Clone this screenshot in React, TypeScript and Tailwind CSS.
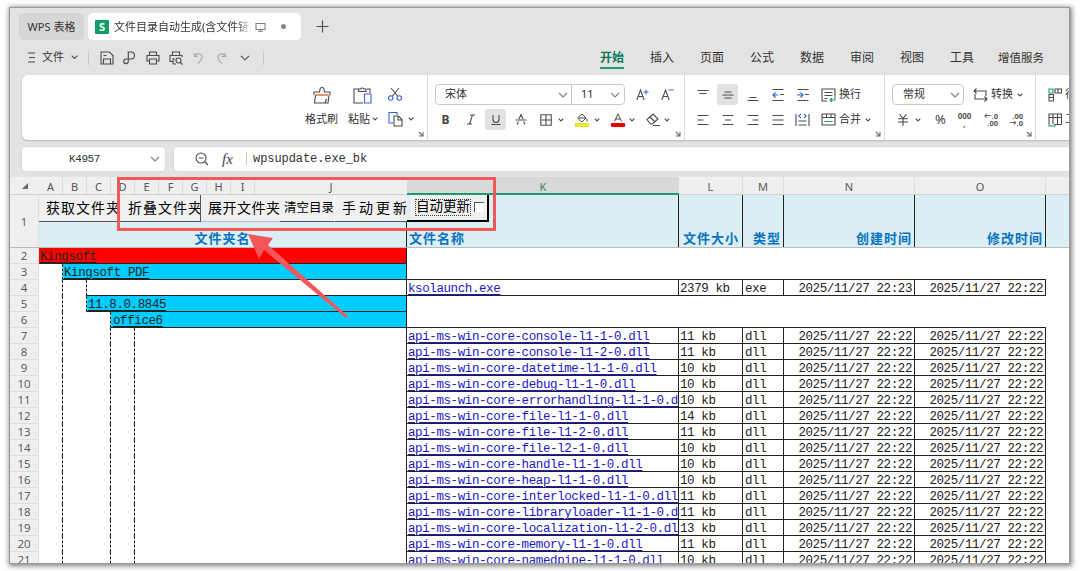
import React from 'react';

const files = [
  { name: 'api-ms-win-core-console-l1-1-0.dll', size: 11 },
  { name: 'api-ms-win-core-console-l1-2-0.dll', size: 11 },
  { name: 'api-ms-win-core-datetime-l1-1-0.dll', size: 10 },
  { name: 'api-ms-win-core-debug-l1-1-0.dll', size: 10 },
  { name: 'api-ms-win-core-errorhandling-l1-1-0.dll', size: 10 },
  { name: 'api-ms-win-core-file-l1-1-0.dll', size: 14 },
  { name: 'api-ms-win-core-file-l1-2-0.dll', size: 11 },
  { name: 'api-ms-win-core-file-l2-1-0.dll', size: 10 },
  { name: 'api-ms-win-core-handle-l1-1-0.dll', size: 10 },
  { name: 'api-ms-win-core-heap-l1-1-0.dll', size: 10 },
  { name: 'api-ms-win-core-interlocked-l1-1-0.dll', size: 11 },
  { name: 'api-ms-win-core-libraryloader-l1-1-0.dll', size: 11 },
  { name: 'api-ms-win-core-localization-l1-2-0.dll', size: 13 },
  { name: 'api-ms-win-core-memory-l1-1-0.dll', size: 11 },
  { name: 'api-ms-win-core-namedpipe-l1-1-0.dll', size: 10 },
];

const menus = ['插入', '页面', '公式', '数据', '审阅', '视图', '工具'];

function Icon({ d, blue, green, w = 16, h = 16, className = '' }: { d?: string; blue?: string; green?: string; w?: number; h?: number; className?: string }) {
  return (
    <svg width={w} height={h} viewBox={`0 0 ${w} ${h}`} fill="none" stroke="#4a4a4a" strokeWidth="1.1" className={`shrink-0 ${className}`}>
      {d && <path d={d} />}
      {blue && <path d={blue} stroke="#3b62d6" />}
      {green && <path d={green} stroke="#1a9a68" />}
    </svg>
  );
}

function Chevron({ big = false }: { big?: boolean }) {
  return big
    ? <Icon w={10} h={6} d="M1 1l4 4 4-4" className="opacity-70" />
    : <Icon w={6} h={4} d="M.7.7L3 3 5.3.7" />;
}

function Launcher() {
  return <Icon w={6} h={6} d="M1 1l4 4M5 1v4H1" className="absolute right-[3px] bottom-[3px] opacity-80" />;
}

function Slot({ children, active = false }: { children: React.ReactNode; active?: boolean }) {
  return (
    <div className="flex w-[25px] shrink-0 items-center justify-center">
      <div className={`flex h-[21px] w-[21px] items-center justify-center rounded-[3px] ${active ? 'bg-[#e2e2e2]' : ''}`}>{children}</div>
    </div>
  );
}

function TitleBar() {
  return (
    <div className="flex h-[32px] shrink-0 items-start pt-[5px] pl-[9px] text-[11px] leading-[27px]">
      <div className="h-[27px] w-[65px] rounded-[5px] bg-[#d6d6d6] text-center">WPS 表格</div>
      <div className="ml-[4px] flex h-[27px] w-[213px] items-center rounded-[5px] bg-white pl-[7px]">
        <div className="flex h-[14px] w-[14px] items-center justify-center rounded-[1px] bg-[#109d68] text-[11px] leading-none font-bold text-white">S</div>
        <div className="ml-[5px] w-[138px] overflow-hidden whitespace-nowrap [mask-image:linear-gradient(to_right,black_88%,transparent)]">文件目录自动生成(含文件链接)</div>
        <Icon w={11} h={10} d="M1 1.5h9v6H1zM3 9.2h5M5.5 7.5v2" className="ml-[3px] opacity-70" />
        <div className="ml-[15px] h-[5px] w-[5px] rounded-full bg-[#888]" />
      </div>
      <Icon w={13} h={13} d="M6.5 0.5v12M.5 6.5h12" className="mt-[7px] ml-[15px]" />
    </div>
  );
}

function MenuBar() {
  return (
    <div className="flex h-[35px] shrink-0 items-center text-[12px]">
      <Icon w={9} h={11} d="M1 1h7M2 5.5h6M1 10h7" className="ml-[17px]" />
      <span className="ml-[6px] w-[23px] text-[11px] whitespace-nowrap">文件</span>
      <span className="ml-[6px]"><Icon w={7} h={5} d="M.7.7l2.8 2.8L6.3.7" /></span>
      <div className="ml-[10px] h-[14px] w-px bg-[#c8c8c8]" />
      <Icon w={14} h={14} d="M1 1h8.5l3.5 3.5V13H1zM3.5 13V8h7v5M3.5 4.5h3" className="ml-[11px]" />
      <Icon w={13} h={14} d="M4.5 1H8a3.5 3.5 0 010 7H3a2.3 2.3 0 102.3 2.3V1" className="ml-[9px]" />
      <Icon w={14} h={14} d="M3.5 4V1h7v3M3.5 10H1V4.5h12V10h-2.5M3.5 8h7v5h-7z" className="ml-[10px]" />
      <Icon w={14} h={14} d="M3.5 4V1h7v3M4 10.5H1V4.5h12V6M4 13V8h2M4 13h3M12 9.5a2.5 2.5 0 11-5 0 2.5 2.5 0 015 0M11.3 11.3L13.5 13.5" className="ml-[9px]" />
      <Icon w={11} h={12} d="M2 1L1.5 4.5 5 4.5M1.5 4.3C4.5 0 9.8 2 9 6 8.7 8 6.5 10 5 11.5" className="ml-[10px] opacity-40" />
      <Icon w={11} h={12} d="M9 1l.5 3.5H6M9.5 4.3C6.5 0 1.2 2 2 6 2.3 8 4.5 10 6 11.5" className="ml-[12px] opacity-40" />
      <Icon w={10} h={6} d="M1 .8l4 4 4-4" className="ml-[13px]" />
      <div className="ml-[13px] h-[14px] w-px bg-[#c8c8c8]" />
      <div className="ml-[336px] flex items-center whitespace-nowrap">
        <span className="relative mr-[26px] w-[24px] font-bold text-[#087a57]">
          开始
          <i className="absolute right-0 -bottom-[2px] left-0 h-[2px] bg-[#169a72]" />
        </span>
        {menus.map((m) => <span key={m} className="mr-[26px] w-[24px] shrink-0">{m}</span>)}
        <span className="-ml-[2px] text-[11.5px]">增值服务</span>
      </div>
    </div>
  );
}

function ClipboardGroup() {
  return (
    <div className="relative flex w-[406px] shrink-0 border-r border-[#d9d9d9] pl-[283px]">
      <div className="flex w-[33px] flex-col items-center pt-[11px]">
        <svg width="18" height="18" viewBox="0 0 18 18" fill="none" stroke="#4a4a4a" strokeWidth="1.1">
          <path d="M1 9V6h5.5L7 3.5a2 2 0 114 0L11.5 6H17v3M2.500 9L1.500 17h13.500l1-8M12 17l1.500-4" />
          <path d="M2.5 9h13" stroke="#dd7739" strokeWidth="1.5" />
        </svg>
        <span className="mt-[7px] text-[11px] leading-[16px] whitespace-nowrap">格式刷</span>
      </div>
      <div className="ml-[10px] w-[31px] pt-[11px]">
        <Icon w={19} h={18} d="M5 3H1v14h9M14 3h3v4M5.5 5.5V3h2a2 2 0 013.5 0h2v2.5z" blue="M11.5 8h6.5v9h-6.5z" className="ml-[5px]" />
        <div className="mt-[7px] flex items-center text-[11px] leading-[16px] whitespace-nowrap">粘贴<span className="ml-[2px]"><Chevron /></span></div>
      </div>
      <div className="ml-[8px] pt-[12px]">
        <Icon w={16} h={14} d="M4 1l7 8.5M12 1L5 9.5" blue="M6 11a2.2 2.2 0 11-4.5 0 2.2 2.2 0 014.5 0M14.5 11a2.2 2.2 0 11-4.5 0 2.2 2.2 0 014.5 0" />
        <div className="mt-[10px] flex items-center gap-[5px]">
          <Icon w={16} h={16} d="M7 5h4.5L15 8.5V15H7zM11 5v4h4" blue="M6 12H2V1.5h8V4" />
          <Chevron />
        </div>
      </div>
      <Launcher />
    </div>
  );
}

function FontGroup() {
  return (
    <div className="relative w-[257px] shrink-0 border-r border-[#d9d9d9] pl-[5px]">
      <div className="mt-[9px] flex h-[21px] items-center text-[11px]">
        <div className="ml-[2px] flex h-[21px] w-[190px] items-center rounded-[4px] border border-[#c9c9c9]">
          <span className="w-[135px] pl-[9px]">
            <span className="flex items-center justify-between pr-[3px]">宋体<Chevron big /></span>
          </span>
          <span className="flex h-full flex-1 items-center justify-between border-l border-[#c9c9c9] pr-[4px] pl-[9px]">11<Chevron big /></span>
        </div>
        <Icon w={14} h={13} d="M.8 12L4.500 2 8.200 12M2 8.500h5" blue="M7.500 4h5M10 1.500v5" className="ml-[11px]" />
        <Icon w={14} h={13} d="M.8 12L4.500 2 8.200 12M2 8.500h5" blue="M7.500 2h5" className="ml-[11px]" />
      </div>
      <div className="mt-[4px] flex h-[21px] items-center">
        <Slot><span className="text-[12px] font-bold text-[#444]">B</span></Slot>
        <Slot><Icon w={10} h={11} d="M4 1h5M1 10h5M6.5 1L3.5 10" /></Slot>
        <Slot active><Icon w={10} h={12} d="M2 1v4.5a3 3 0 006 0V1M.5 10.5h9" /></Slot>
        <Slot><Icon w={12} h={11} d="M.5 6h11M4 5l2-4.5L8 5M3.5 7.5L2 10.5M8.5 7.5L10 10.5" /></Slot>
        <Icon w={12} h={12} d="M.8.8h10.4v10.4H.8zM6 1v10M1 6h10" className="ml-[7px]" />
        <span className="ml-[6px]"><Chevron /></span>
        <svg width="14" height="14" viewBox="0 0 14 14" fill="none" stroke="#4a4a4a" className="ml-[11px]">
          <path d="M3 4.5L7 1l4 4-4 4-4-3.5zM4 5h7M12 5.5v3" />
          <rect x=".5" y="10.5" width="13" height="3" fill="#f7f900" stroke="#b8b900" strokeWidth=".5" />
        </svg>
        <span className="ml-[5px]"><Chevron /></span>
        <svg width="14" height="14" viewBox="0 0 14 14" fill="none" stroke="#4a4a4a" className="ml-[11px]">
          <path d="M3.5 8.5L7 .8 10.5 8.5M4.8 6h4.4" />
          <rect y="10" width="14" height="4" rx="1" fill="#e60000" stroke="none" />
        </svg>
        <span className="ml-[4px]"><Chevron /></span>
        <Icon w={14} h={13} d="M1 6.5L7 1l5 5-5.5 5h-2zM4 4l5 5M7 12.5h7" className="ml-[11px]" />
        <span className="ml-[4px]"><Chevron /></span>
      </div>
      <Launcher />
    </div>
  );
}

function AlignGroup() {
  return (
    <div className="relative w-[200px] shrink-0 border-r border-[#d9d9d9] pl-[5px]">
      <div className="mt-[9px] flex h-[21px] items-center text-[11px]">
        <Slot><Icon w={12} h={12} d="M.5 1.500h11M2.500 4.500h7" /></Slot>
        <Slot active><Icon w={12} h={12} d="M2.5 3h7M.5 6h11M2.5 9h7" /></Slot>
        <Slot><Icon w={12} h={12} d="M2.500 8.500h7M.5 11.500h11" /></Slot>
        <Slot><Icon w={12} h={12} d="M.5.5h11M8 5.5h4M.5 11.5h11" blue="M6.5 6H1M3.5 3.5L1 6l2.5 2.5" /></Slot>
        <Slot><Icon w={12} h={12} d="M.5.5h11M8 5.5h4M.5 11.5h11" blue="M0 6h6M3.5 3.5L6 6 3.5 8.5" /></Slot>
        <Icon w={15} h={14} d="M6 13H1V1h13v7M3.5 4.5h8M3.5 7.5h8M3.5 10.5h3" green="M14 8v4H9M11 10l-2 2 2 2" className="ml-[6px]" />
        <span className="ml-[3px]">换行</span>
      </div>
      <div className="mt-[4px] flex h-[21px] items-center text-[11px]">
        <Slot><Icon w={12} h={12} d="M.5 1.5h11M.5 6h6M.5 10.5h11" /></Slot>
        <Slot><Icon w={12} h={12} d="M.5 1.5h11M3 6h6M.5 10.5h11" /></Slot>
        <Slot><Icon w={12} h={12} d="M.5 1.5h11M5.5 6h6M.5 10.5h11" /></Slot>
        <Slot><Icon w={12} h={12} d="M.5 1.5h11M.5 6h11M.5 10.5h11" /></Slot>
        <Slot><Icon w={15} h={14} d="M1 1v12M14 1v12M3.5 8h8M3.5 12h8" blue="M6 .8L3.8 3 6 5.2M9 .8L11.2 3 9 5.2" /></Slot>
        <Icon w={15} h={13} d="M1 1h13v11H1zM1 4.5h13M5.5 1v3.5M10 1v3.5" green="M3.5 8.500h8" className="ml-[6px]" />
        <span className="mr-[4px] ml-[3px]">合并</span>
        <Chevron />
      </div>
      <Launcher />
    </div>
  );
}

function NumberGroup() {
  return (
    <div className="relative w-[151px] shrink-0 border-r border-[#d9d9d9] pl-[7px]">
      <div className="mt-[9px] flex h-[21px] items-center text-[11px] whitespace-nowrap">
        <div className="flex h-[21px] w-[72px] items-center justify-between rounded-[4px] border border-[#c9c9c9] pr-[3px] pl-[10px]">常规<Chevron big /></div>
        <Icon w={15} h={14} d="M3.5.5L1 3l2.5 2.5M1 3h12v5M11.500 13.500L14 11l-2.500-2.500M14 11H2V6" className="ml-[9px]" />
        <span className="mr-[4px] ml-[3px]">转换</span>
        <Chevron />
      </div>
      <div className="mt-[4px] flex h-[21px] items-center">
        <Icon w={12} h={12} d="M2.5 0L6 4.5 9.5 0M1 4.8h10M1 8h10M6 4.5V12" className="ml-[5px]" />
        <span className="ml-[6px]"><Chevron /></span>
        <span className="ml-[14px] w-[14px] text-[13px] text-[#444]">%</span>
        <span className="ml-[8px] flex h-[15px] w-[15px] flex-col items-center text-[8px] leading-[8px] font-bold text-[#555]"><span>000</span><span>,</span></span>
        <span className="ml-[11px] flex w-[15px] flex-col items-end text-[7.5px] leading-[7px] font-bold text-[#555]"><span className="whitespace-nowrap">←.0</span><span>.00</span></span>
        <span className="ml-[10px] flex w-[15px] flex-col items-end text-[7.5px] leading-[7px] font-bold text-[#555]"><span>.00</span><span className="whitespace-nowrap">→.0</span></span>
      </div>
      <Launcher />
    </div>
  );
}

function Ribbon() {
  return (
    <div className="ml-[12px] flex h-[65px] shrink-0 overflow-hidden rounded-l-[6px] bg-white shadow-[0_1px_2px_rgba(0,0,0,0.2)]">
      <ClipboardGroup />
      <FontGroup />
      <AlignGroup />
      <NumberGroup />
      <div className="w-[60px] shrink-0 pl-[12px] text-[11px] whitespace-nowrap">
        <div className="mt-[9px] flex h-[21px] items-center">
          <Icon w={14} h={14} d="M7 1h6.5v4H7zM10 1v4M1 6.5h4.5V13H1zM1 9.5h4.5" green="M1 1h4v4H1z" className="mr-[3px]" />行和列
        </div>
        <div className="mt-[4px] flex h-[21px] items-center">
          <Icon w={14} h={14} d="M1 11V1h12.5v10.5H6M1 4.5h12.5M5 1v10M9.5 1v10" green="M1 11v2h6v-2" className="mr-[3px]" />工作表
        </div>
      </div>
    </div>
  );
}

function FormulaBar() {
  return (
    <div className="mt-[7px] flex h-[24px] shrink-0 pl-[12px]">
      <div className="flex h-full w-[143px] items-center rounded-[4px] bg-white pl-[47px] font-['Liberation_Mono'] text-[11px] tracking-[-0.4px] shadow-[0_0_2px_rgba(0,0,0,0.12)]">
        <span className="w-[81px]">K4957</span>
        <Chevron big />
      </div>
      <div className="ml-[9px] flex h-full flex-1 items-center rounded-l-[4px] bg-white pl-[21px] shadow-[0_0_2px_rgba(0,0,0,0.12)]">
        <Icon w={14} h={14} d="M11 6a5 5 0 11-10 0 5 5 0 0110 0M3.5 6h5M9.5 9.5L13 13" />
        <span className="ml-[13px] w-[24px] font-['Liberation_Serif'] text-[15px] text-[#444] italic">fx</span>
        <div className="h-[14px] w-px bg-[#ccc]" />
        <span className="ml-[6px] font-['Liberation_Mono'] text-[12px] tracking-[-0.07px]">wpsupdate.exe_bk</span>
      </div>
    </div>
  );
}

function ColumnHeaders() {
  return (
    <div className="mt-[6px] flex h-[18px] shrink-0 border-b border-[#d2d2d2] bg-[#efefef] text-center text-[11px] leading-[20px] text-[#555]">
      <div className="flex w-[29px] items-center justify-center">
        <svg width="6" height="6"><path d="M6 0v6H0z" fill="#666" /></svg>
      </div>
      {['A', 'B', 'C', 'D', 'E', 'F', 'G', 'H', 'I'].map((c) => (
        <div key={c} className="w-[24px] border-r border-[#dcdcdc]">{c}</div>
      ))}
      <div className="w-[152px]">J</div>
      <div className="h-[18px] w-[272px] border-b-2 border-[#1c9a72] bg-[#d9d9d9] text-[#2b8568]">K</div>
      <div className="w-[64px] border-r border-[#dcdcdc]">L</div>
      <div className="w-[41px] border-r border-[#dcdcdc]">M</div>
      <div className="w-[131px] border-r border-[#dcdcdc]">N</div>
      <div className="w-[131px] border-r border-[#dcdcdc]">O</div>
    </div>
  );
}

function RowNumber({ n }: { n: number }) {
  return <div className="w-[29px] shrink-0 border-r border-b border-[#dedede] bg-[#efefef] text-center font-['Open_Sans'] text-[11.5px] leading-[15px] tracking-normal text-[#555]">{n}</div>;
}

function DataCells({ name, size, type, created }: { name: string; size: string; type: string; created: string }) {
  return (
    <>
      <div className="w-[272px] shrink-0 overflow-hidden border-r border-b border-[#222] pl-[1px] whitespace-nowrap text-[#2018c8] underline underline-offset-2">{name}</div>
      <div className="w-[64px] shrink-0 border-r border-b border-[#222] pl-[1px]">{size}</div>
      <div className="w-[41px] shrink-0 border-r border-b border-[#222] pl-[2px]">{type}</div>
      <div className="w-[131px] shrink-0 border-r border-b border-[#222] pr-[2px] text-right">{created}</div>
      <div className="w-[131px] shrink-0 border-r border-b border-[#222] pr-[2px] text-right">2025/11/27 22:22</div>
    </>
  );
}

function Dash() {
  return <div className="w-[24px] shrink-0 border-r border-dashed border-[#222]" />;
}

function ControlButtons() {
  return (
    <div className="absolute top-0 left-[29px] flex h-[27px] text-[14px] leading-[28px] whitespace-nowrap text-black">
      <div className="w-[81px] overflow-hidden border-r border-b border-r-white border-b-[#555] bg-[#f0f0f0] pl-[7px] tracking-[1px]">获取文件夹</div>
      <div className="w-[81px] overflow-hidden border-r border-b border-[#555] bg-[#f0f0f0] pl-[8px] tracking-[1px]">折叠文件夹</div>
      <div className="w-[79px] overflow-hidden border-b border-[#bbb] bg-[#f0f0f0] pl-[7px] tracking-[0.5px]">展开文件夹</div>
      <div className="w-[55px] overflow-hidden border-r border-b border-r-white border-b-[#555] bg-[#f0f0f0] pl-[4px] text-[12.5px] tracking-normal">清空目录</div>
      <div className="w-[72px] border-b border-[#555] bg-[#f0f0f0] pl-[7px] tracking-[3px]">手动更新</div>
      <div className="flex w-[82px] border-r-2 border-b-2 border-black pt-[4px] pl-[8px] [background:linear-gradient(#f0f0f0,#f0f0f0)_3px_0_no-repeat]">
        <span className="h-[17px] border border-dotted border-[#444] text-[13.5px] leading-[16px] tracking-normal">自动更新</span>
        <span className="mt-[3px] ml-[3px] h-[10px] w-[10px] border-t border-l border-[#555] bg-white" />
      </div>
    </div>
  );
}

function Sheet() {
  return (
    <div className="relative flex-1 overflow-hidden bg-white font-['Liberation_Mono','Noto_Sans_CJK_SC',monospace] text-[12.5px] leading-[18px] tracking-[-0.4px] text-[#222]">
      <div className="flex h-[53px] border-b border-[#bbb] bg-[#daeef3] text-[13px] leading-[14px] font-bold tracking-[1px] text-[#0872c2]">
        <div className="w-[29px] shrink-0 border-r border-[#dedede] bg-[#efefef] pt-[20px] text-center font-['Open_Sans'] text-[11.5px] font-normal tracking-normal text-[#555]">1</div>
        <div className="flex w-[368px] items-end justify-center border-r border-[#222]">文件夹名</div>
        <div className="flex w-[272px] items-end border-r border-[#222] pl-[2px]">文件名称</div>
        <div className="flex w-[64px] items-end justify-end border-r border-[#222] pr-[3px]">文件大小</div>
        <div className="flex w-[41px] items-end justify-end border-r border-[#222] pr-[2px]">类型</div>
        <div className="flex w-[131px] items-end justify-end border-r border-[#222] pr-[2px]">创建时间</div>
        <div className="flex w-[131px] items-end justify-end border-r border-[#222] pr-[2px]">修改时间</div>
      </div>
      <div className="flex h-[16px]">
        <RowNumber n={2} />
        <div className="w-[368px] border-r border-b border-[#222] bg-[#ff0000] pl-[1px] underline underline-offset-2">Kingsoft</div>
      </div>
      <div className="flex h-[16px]">
        <RowNumber n={3} />
        <Dash />
        <div className="w-[344px] border-r border-b border-[#222] bg-[#00ccff] pl-[1px] underline underline-offset-2">Kingsoft PDF</div>
        <div className="w-[639px] border-b border-[#222]" />
      </div>
      <div className="flex h-[16px]">
        <RowNumber n={4} />
        <Dash />
        <Dash />
        <div className="w-[320px] border-r border-b border-[#222]" />
        <DataCells name="ksolaunch.exe" size="2379 kb" type="exe" created="2025/11/27 22:23" />
      </div>
      <div className="flex h-[16px]">
        <RowNumber n={5} />
        <Dash />
        <Dash />
        <div className="w-[320px] border-r border-b border-[#222] bg-[#00ccff] pl-[1px] underline underline-offset-2">11.8.0.8845</div>
      </div>
      <div className="flex h-[16px]">
        <RowNumber n={6} />
        <Dash />
        <div className="w-[24px]" />
        <Dash />
        <div className="w-[296px] border-r border-b border-[#222] bg-[#00ccff] pl-[2px] underline underline-offset-2">office6</div>
        <div className="w-[639px] border-b border-[#222]" />
      </div>
      {files.map((f, i) => (
        <div key={f.name} className="flex h-[16px]">
          <RowNumber n={i + 7} />
          <Dash />
          <div className="w-[24px] shrink-0" />
          <Dash />
          <Dash />
          <div className="w-[272px] shrink-0 border-r border-[#222]" />
          <DataCells name={f.name} size={`${f.size} kb`} type="dll" created="2025/11/27 22:22" />
        </div>
      ))}
      <ControlButtons />
    </div>
  );
}

export default function App() {
  return (
    <div className="relative h-[571px] w-[1080px] overflow-hidden bg-white pt-[8px] pl-[10px] font-['Noto_Sans','Noto_Sans_CJK_SC',sans-serif] text-[#333]">
      <div className="flex h-[555px] w-[1059px] flex-col bg-[#e3e3e3] shadow-[0_0_0_1px_#999,1px_1px_5px_2px_rgba(0,0,0,0.5)]">
        <div className="flex min-h-0 flex-1 flex-col overflow-hidden">
          <TitleBar />
          <MenuBar />
          <Ribbon />
          <FormulaBar />
          <ColumnHeaders />
          <Sheet />
        </div>
      </div>

      {/* highlight frame and arrow over the macro buttons */}
      <div className="absolute top-[177px] left-[117px] h-[54px] w-[379px] border-[3px] border-[#f2575a]" />
      <svg width="106" height="90" viewBox="0 0 106 90" className="absolute top-[231px] left-[246px]">
        <path d="M2 3l25 4-5 7 80 71-2 2L18 19l-5 9z" fill="#f2575a" />
      </svg>
    </div>
  );
}
